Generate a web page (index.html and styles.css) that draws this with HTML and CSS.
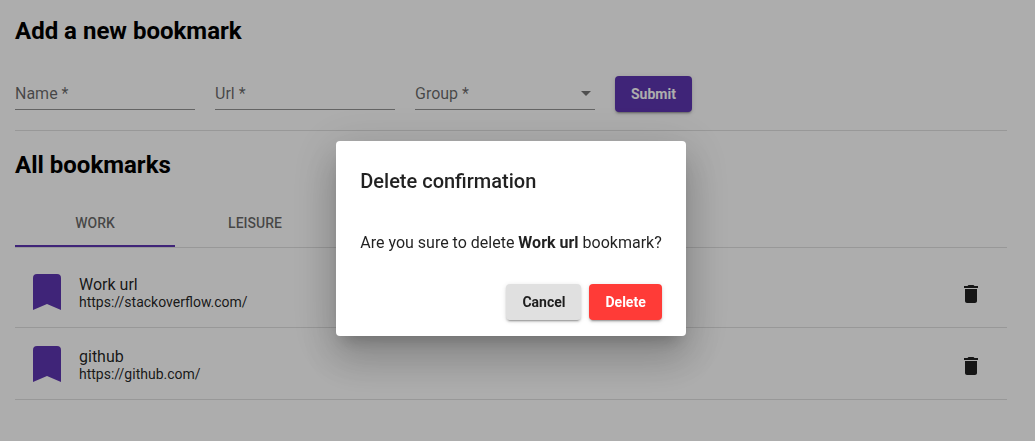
FILE: index.html
```html
<!DOCTYPE html>
<html lang="en">
<head>
<meta charset="utf-8">
<meta name="viewport" content="width=device-width, initial-scale=1">
<title>Bookmarks</title>
<link rel="stylesheet" href="styles.css">
</head>
<body>
<main class="page">
  <section class="section">
    <h2 class="heading">Add a new bookmark</h2>
    <form class="form">
      <div class="field">
        <input class="control" type="text" aria-label="Name" placeholder="Name *" required>
      </div>
      <div class="field">
        <input class="control" type="text" aria-label="Url" placeholder="Url *" required>
      </div>
      <div class="field field-select">
        <select class="control" aria-label="Group" required>
          <option value="">Group *</option>
          <option>Work</option>
          <option>Leisure</option>
        </select>
        <svg class="arrow" viewBox="0 0 10 5" aria-hidden="true"><path d="M0 0h10L5 5z"/></svg>
      </div>
      <button class="button button-primary" type="submit">Submit</button>
    </form>
  </section>
  <section class="section">
    <h2 class="heading">All bookmarks</h2>
    <div class="tabs" role="tablist">
      <button class="tab tab-active" type="button" role="tab" aria-selected="true">WORK</button>
      <button class="tab" type="button" role="tab" aria-selected="false">LEISURE</button>
    </div>
    <ul class="list">
      <li class="item">
        <svg class="mark" viewBox="0 0 28 36" aria-hidden="true"><path d="M4 0h20a4 4 0 0 1 4 4v32l-14-6-14 6V4a4 4 0 0 1 4-4z"/></svg>
        <div class="info">
          <span class="name">Work url</span>
          <a class="link" href="https://stackoverflow.com/">https://stackoverflow.com/</a>
        </div>
        <button class="remove" type="button" aria-label="Delete Work url">
          <svg class="bin" viewBox="0 0 24 24" aria-hidden="true"><path d="M6 19c0 1.100.9 2 2 2h8c1.100 0 2-.9 2-2V7H6v12zM19 4h-3.500l-1-1h-5l-1 1H5v2h14V4z"/></svg>
        </button>
      </li>
      <li class="item">
        <svg class="mark" viewBox="0 0 28 36" aria-hidden="true"><path d="M4 0h20a4 4 0 0 1 4 4v32l-14-6-14 6V4a4 4 0 0 1 4-4z"/></svg>
        <div class="info">
          <span class="name">github</span>
          <a class="link" href="https://github.com/">https://github.com/</a>
        </div>
        <button class="remove" type="button" aria-label="Delete github">
          <svg class="bin" viewBox="0 0 24 24" aria-hidden="true"><path d="M6 19c0 1.100.9 2 2 2h8c1.100 0 2-.9 2-2V7H6v12zM19 4h-3.500l-1-1h-5l-1 1H5v2h14V4z"/></svg>
        </button>
      </li>
    </ul>
  </section>
</main>
<div class="overlay">
  <div class="dialog" role="dialog" aria-modal="true" aria-labelledby="dialog-title">
    <h2 class="dialog-title" id="dialog-title">Delete confirmation</h2>
    <p class="dialog-text">Are you sure to delete <b class="strong">Work url</b> bookmark?</p>
    <div class="actions">
      <button class="button button-plain" type="button">Cancel</button>
      <button class="button button-danger" type="button">Delete</button>
    </div>
  </div>
</div>
</body>
</html>
```
FILE: styles.css
```css
* {
  box-sizing: border-box;
}

body {
  margin: 0;
  background: #fff;
  color: rgba(0, 0, 0, 0.87);
  font-family: Roboto, "Liberation Sans", sans-serif;
  font-size: 16px;
}

button,
input,
select {
  font: inherit;
}

.page {
  padding: 15px 28px 0 15px;
}

.heading {
  margin: 0;
  color: #000;
  font-size: 24px;
  line-height: 32px;
  font-weight: 700;
}

.form {
  display: flex;
  align-items: center;
  gap: 20px;
  padding: 29px 0 18px;
  margin-bottom: 18px;
  border-bottom: 1px solid rgba(0, 0, 0, 0.12);
}

.field {
  width: 180px;
  border-bottom: 1px solid rgba(0, 0, 0, 0.42);
}

.control {
  display: block;
  width: 100%;
  height: 31px;
  padding: 0;
  border: 0;
  outline: 0;
  appearance: none;
  background: transparent;
  color: rgba(0, 0, 0, 0.6);
}

.control::placeholder {
  color: rgba(0, 0, 0, 0.6);
}

.field-select {
  display: flex;
  align-items: center;
}

.arrow {
  flex: none;
  width: 10px;
  height: 5px;
  margin-right: 4px;
  fill: rgba(0, 0, 0, 0.54);
}

.button {
  height: 36px;
  padding: 0 16px;
  border: 0;
  border-radius: 4px;
  font-size: 14px;
  font-weight: 700;
  box-shadow: 0 3px 1px -2px rgba(0, 0, 0, 0.2), 0 2px 2px 0 rgba(0, 0, 0, 0.14), 0 1px 5px 0 rgba(0, 0, 0, 0.12);
}

.button-primary {
  background: #5e35b1;
  color: #fff;
}

.button-plain {
  background: #e0e0e0;
  color: rgba(0, 0, 0, 0.87);
}

.button-danger {
  background: #ff3b37;
  color: #fff;
}

.tabs {
  display: flex;
  margin-top: 18px;
  border-bottom: 1px solid rgba(0, 0, 0, 0.12);
}

.tab {
  width: 160px;
  height: 48px;
  padding: 2px 0 0;
  border: 0;
  border-bottom: 2px solid transparent;
  background: transparent;
  color: rgba(0, 0, 0, 0.6);
  font-size: 14px;
  font-weight: 500;
}

.tab-active {
  border-bottom-color: #5e35b1;
}

.list {
  margin: 8px 0 0;
  padding: 0;
  list-style: none;
}

.item {
  display: flex;
  align-items: center;
  gap: 18px;
  height: 72px;
  padding: 0 24px 0 18px;
  border-bottom: 1px solid rgba(0, 0, 0, 0.12);
}

.mark {
  width: 28px;
  height: 36px;
  fill: #5e35b1;
}

.info {
  display: flex;
  flex: 1;
  flex-direction: column;
  align-items: flex-start;
  padding-top: 3px;
}

.name {
  line-height: 18px;
}

.link {
  color: inherit;
  font-size: 14px;
  line-height: 17px;
  text-decoration: none;
}

.remove {
  display: flex;
  padding: 4px 0 0;
  border: 0;
  background: transparent;
}

.bin {
  width: 24px;
  height: 24px;
  fill: rgba(0, 0, 0, 0.87);
}

.overlay {
  position: fixed;
  inset: 0;
  display: flex;
  align-items: center;
  justify-content: center;
  padding: 36px 13px 0 0;
  background: rgba(0, 0, 0, 0.32);
}

.dialog {
  padding: 24px 24px 16px;
  border-radius: 4px;
  background: #fff;
  box-shadow: 0 11px 15px -7px rgba(0, 0, 0, 0.2), 0 24px 38px 3px rgba(0, 0, 0, 0.14), 0 9px 46px 8px rgba(0, 0, 0, 0.12);
}

.dialog-title {
  margin: 0;
  font-size: 20px;
  line-height: 32px;
  font-weight: 500;
}

.dialog-text {
  margin: 33px 0 29px;
  line-height: 25px;
}

.strong {
  font-weight: 700;
}

.actions {
  display: flex;
  justify-content: flex-end;
  gap: 8px;
}
```
